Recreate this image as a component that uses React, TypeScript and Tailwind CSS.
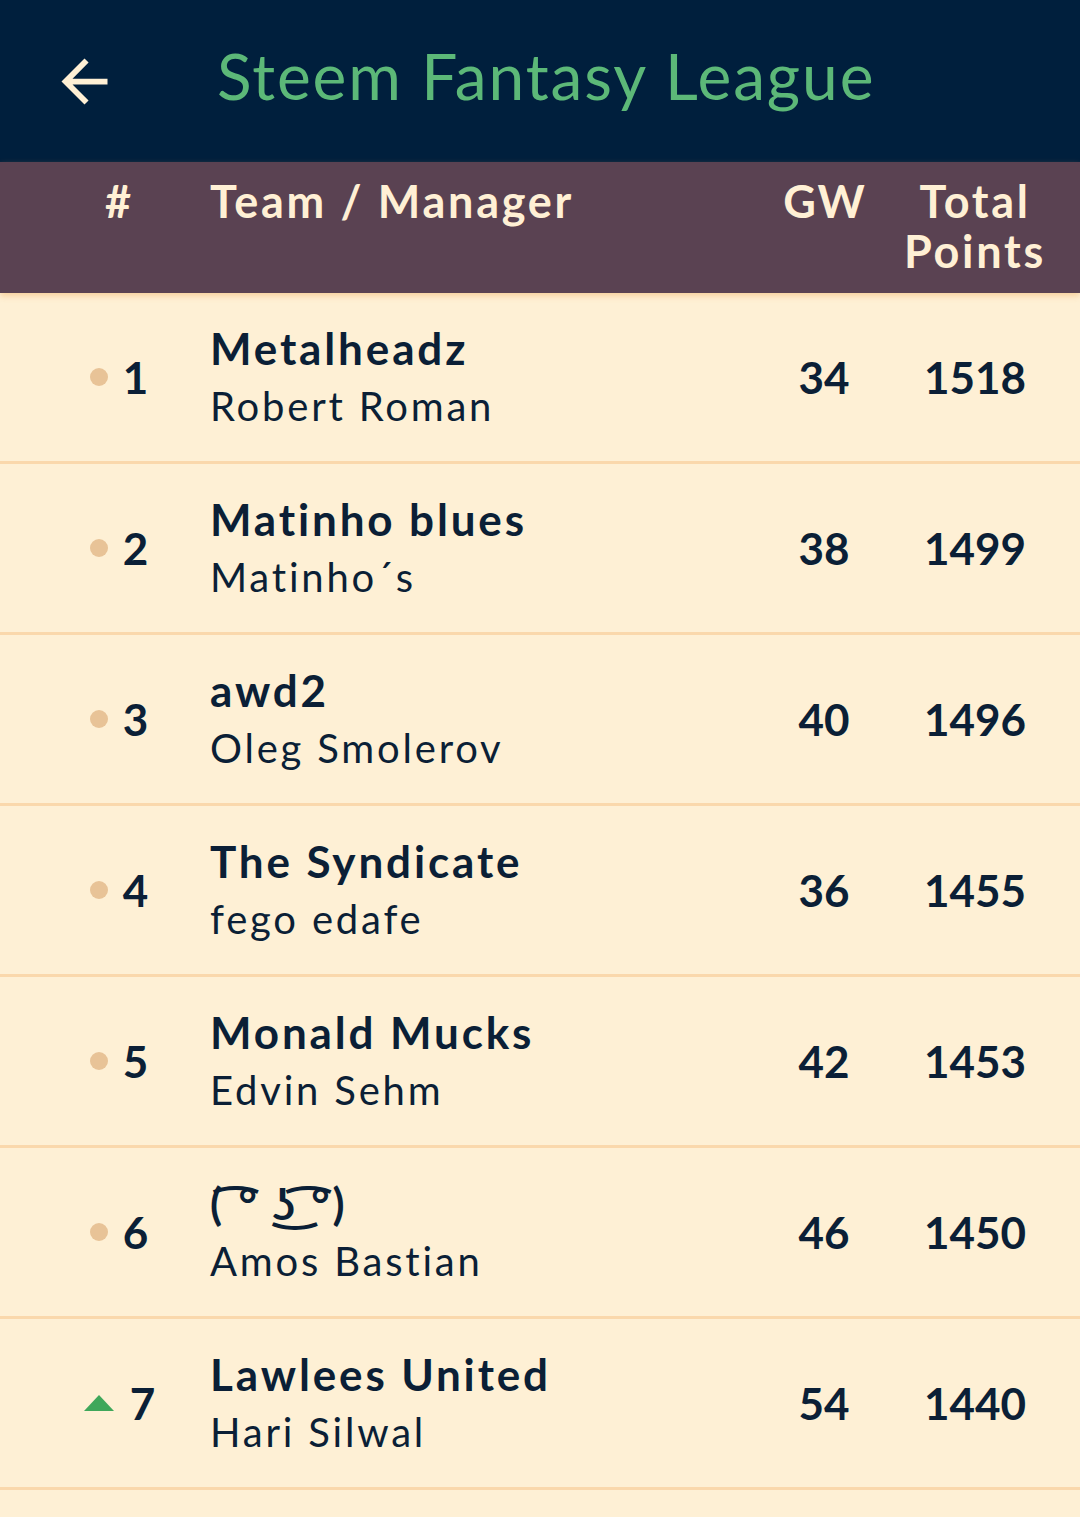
import React from "react";

type Row = {
  rank: number;
  team: string;
  manager: string;
  gw: number;
  total: number;
  move: "same" | "up";
};

const rows: Row[] = [
  { rank: 1, team: "Metalheadz", manager: "Robert Roman", gw: 34, total: 1518, move: "same" },
  { rank: 2, team: "Matinho blues", manager: "Matinho\u00b4s", gw: 38, total: 1499, move: "same" },
  { rank: 3, team: "awd2", manager: "Oleg Smolerov", gw: 40, total: 1496, move: "same" },
  { rank: 4, team: "The Syndicate", manager: "fego edafe", gw: 36, total: 1455, move: "same" },
  { rank: 5, team: "Monald Mucks", manager: "Edvin Sehm", gw: 42, total: 1453, move: "same" },
  { rank: 6, team: "( \u0361\u00b0 \u035c\u0296 \u0361\u00b0)", manager: "Amos Bastian", gw: 46, total: 1450, move: "same" },
  { rank: 7, team: "Lawlees United", manager: "Hari Silwal", gw: 54, total: 1440, move: "up" },
  { rank: 8, team: "", manager: "", gw: 0, total: 0, move: "same" },
];

const font = { fontFamily: "Lato, 'DejaVu Sans', sans-serif" };

function BackArrow() {
  return (
    <svg width="69" height="69" viewBox="0 0 24 24" fill="#fff0d5">
      <path d="M20 11H7.83l5.59-5.59L12 4l-8 8 8 8 1.41-1.41L7.83 13H20v-2z" />
    </svg>
  );
}

function Movement({ move }: { move: Row["move"] }) {
  if (move === "up") {
    return (
      <svg width="32" height="18" viewBox="0 0 32 18">
        <polygon points="16,1 31,17 1,17" fill="#3fa75a" />
      </svg>
    );
  }
  return <div className="w-[18px] h-[18px] rounded-full bg-[#e8c397]" />;
}

export default function App() {
  return (
    <div className="w-[1080px] h-[1517px] overflow-hidden bg-[#fef0d5]" style={font}>
      {/* top bar */}
      <div className="h-[162px] bg-[#001f3d] flex items-center pl-[50px]">
        <BackArrow />
        <div className="ml-[98px] text-[64px] tracking-[0.03em] text-[#5cb878] leading-none pb-[10px]">
          Steem Fantasy League
        </div>
      </div>

      {/* table header */}
      <div className="relative z-10 h-[131px] bg-[#5a4252] text-[#fff0d5] font-bold text-[45px] leading-[50px] flex pt-[14px] shadow-[0_3px_6px_rgba(240,170,90,0.45)]">
        <div className="w-[210px] pl-[26px] flex justify-center">#</div>
        <div className="w-[540px] tracking-[0.06em]">Team / Manager</div>
        <div className="w-[150px] text-center tracking-[0.04em]">GW</div>
        <div className="w-[150px] text-center tracking-[0.06em]">
          Total
          <br />
          Points
        </div>
      </div>

      {/* rows */}
      <div>
        {rows.map((r) => (
          <div
            key={r.rank}
            className="h-[171px] border-b-[3px] border-[#fad8ac] flex items-center text-[#0b1f36]"
          >
            <div className="w-[212px] pl-[26px] flex justify-center items-center">
              {r.team && (
                <div className="flex items-center gap-[15px]">
                  <Movement move={r.move} />
                  <span className="font-bold text-[44px]">{r.rank}</span>
                </div>
              )}
            </div>
            <div className="w-[538px] -ml-[2px] pr-[-2px] flex flex-col">
              <div className="font-bold text-[44px] tracking-[0.065em] leading-[58px] whitespace-nowrap">{r.team}</div>
              <div className="text-[40px] tracking-[0.07em] leading-[58px] whitespace-nowrap">{r.manager}</div>
            </div>
            <div className="w-[152px] text-center font-bold text-[44px]">{r.team && r.gw}</div>
            <div className="w-[150px] text-center font-bold text-[44px]">{r.team && r.total}</div>
          </div>
        ))}
      </div>
    </div>
  );
}
